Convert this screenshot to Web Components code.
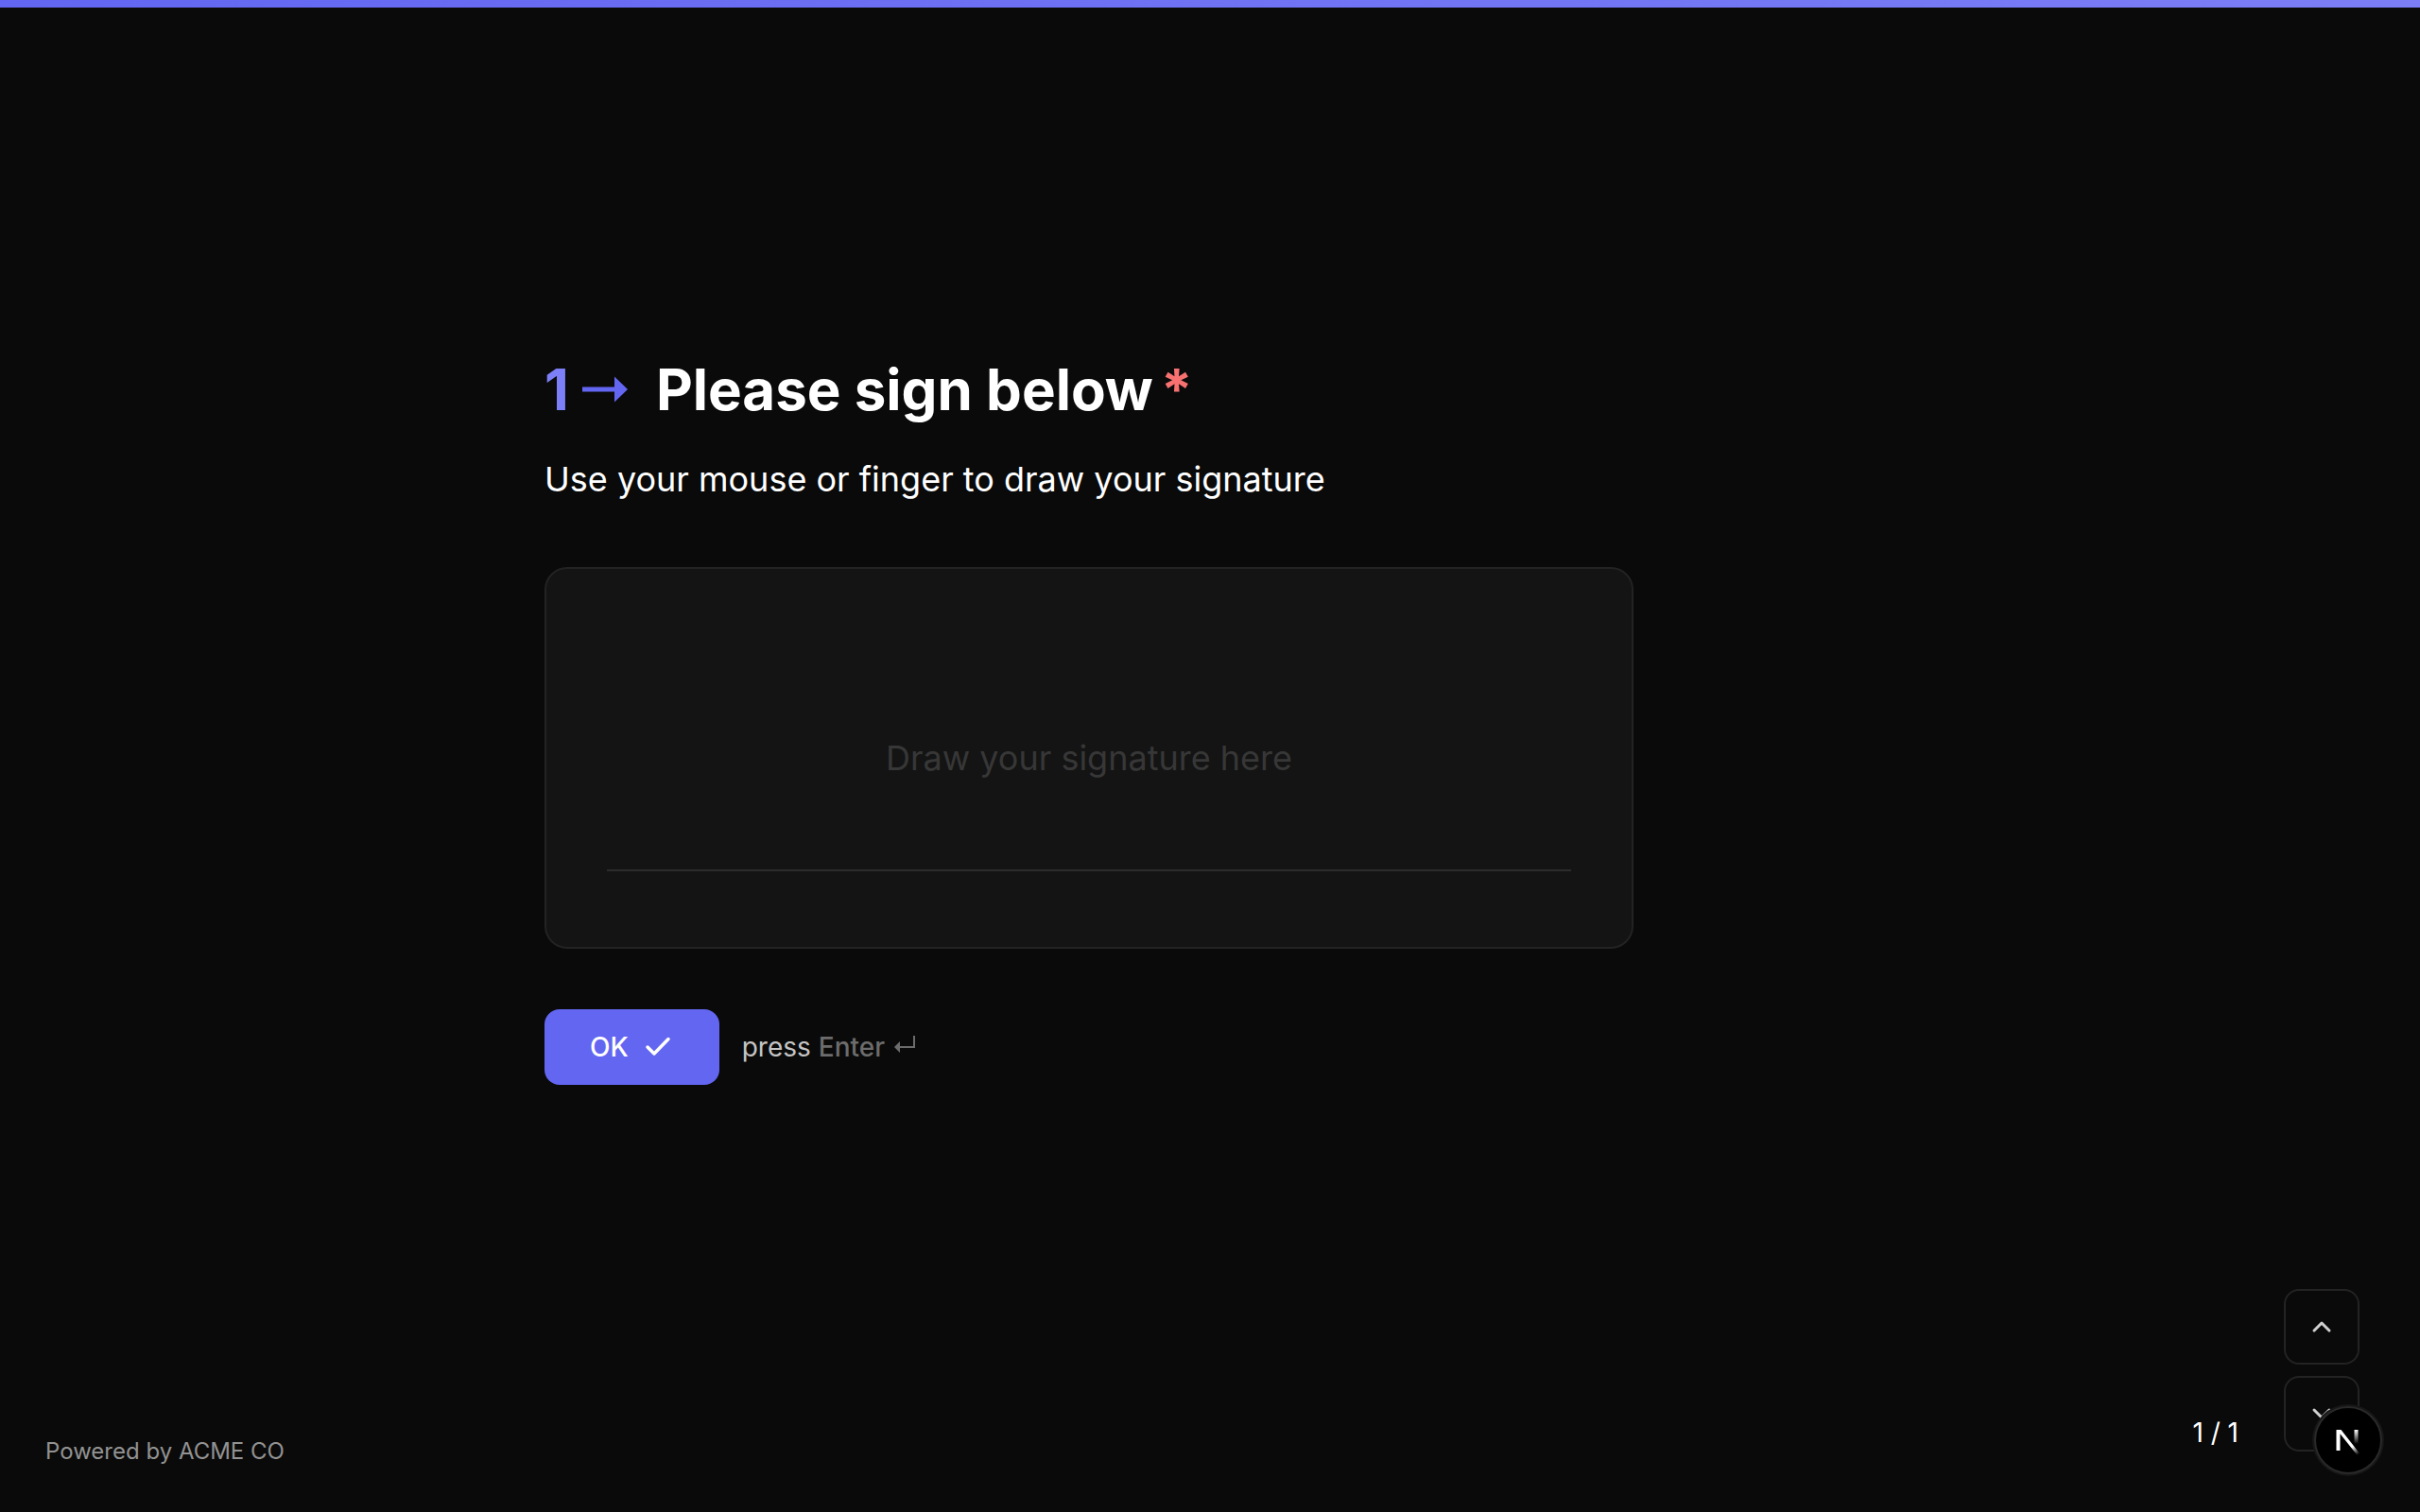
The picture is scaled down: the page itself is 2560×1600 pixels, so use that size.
<!DOCTYPE html>
<html lang="en">
<head>
<meta charset="utf-8">
<meta name="viewport" content="width=device-width, initial-scale=1">
<title>Please sign below</title>
<style>
  body {
    margin: 0;
    background: #0a0a0a;
    color: #fff;
    font-family: Inter, "Liberation Sans", sans-serif;
    -webkit-font-smoothing: antialiased;
  }
</style>
</head>
<body>
<form-app></form-app>

<script>
class ProgressBar extends HTMLElement {
  constructor () {
    super()
    this.attachShadow({ mode: 'open' }).innerHTML = /* html */`
      <style>
        :host {
          display: block;
          height: 8px;
          background: linear-gradient(to right, #6366f1, #7b7ef5);
        }
      </style>
    `
  }
}

class QuestionHeading extends HTMLElement {
  constructor () {
    super()
    this.attachShadow({ mode: 'open' }).innerHTML = /* html */`
      <style>
        :host {
          display: block;
        }

        h1 {
          display: flex;
          align-items: center;
          margin: 0;
          font-size: 60px;
          line-height: 72px;
          font-weight: 700;
        }

        .number {
          display: flex;
          align-items: center;
          gap: 14px;
          margin-right: 30px;
          color: #7c7ff7;
        }

        svg {
          width: 48px;
          height: 28px;
          fill: #6366f1;
        }

        .required {
          margin-left: 8px;
          color: #f87171;
        }

        p {
          margin: 32px 0 0;
          font-size: 36px;
          line-height: 54px;
        }
      </style>
      <h1>
        <span class="number">
          ${this.getAttribute('number')}
          <svg viewBox="0 0 48 28" aria-hidden="true"><path d="M0 11.5h34V0.5L48 14 34 27.5V16.5H0z"/></svg>
        </span>
        <slot name="title"></slot>
        <span class="required">*</span>
      </h1>
      <p><slot name="description"></slot></p>
    `
  }
}

class SignaturePad extends HTMLElement {
  constructor () {
    super()
    this.attachShadow({ mode: 'open' }).innerHTML = /* html */`
      <style>
        :host {
          display: grid;
          height: 400px;
          border: 2px solid #232323;
          border-radius: 24px;
          background: #141414;
        }

        .line,
        .placeholder {
          grid-area: 1 / 1;
        }

        .line {
          align-self: end;
          margin: 0 64px 80px;
          border-bottom: 2px solid #2c2c2c;
        }

        .placeholder {
          place-self: center;
          color: #373737;
          font-size: 36px;
          line-height: 54px;
        }
      </style>
      <div class="line"></div>
      <span class="placeholder"><slot></slot></span>
    `
  }
}

class SubmitRow extends HTMLElement {
  constructor () {
    super()
    this.attachShadow({ mode: 'open' }).innerHTML = /* html */`
      <style>
        :host {
          display: flex;
          align-items: center;
          gap: 24px;
          font-size: 28px;
          line-height: 40px;
        }

        button {
          display: flex;
          align-items: center;
          gap: 16px;
          height: 80px;
          padding: 0 48px;
          border: 0;
          border-radius: 16px;
          background: #6366f1;
          color: #fff;
          font: inherit;
          font-weight: 500;
        }

        button svg {
          width: 32px;
          height: 32px;
        }

        .hint {
          display: flex;
          align-items: center;
          gap: 8px;
          color: #c4c4c4;
        }

        .key {
          display: flex;
          align-items: center;
          gap: 10px;
          color: #6c6c6c;
          font-weight: 500;
        }

        .key svg {
          width: 24px;
          height: 24px;
        }
      </style>
      <button type="button">
        <slot></slot>
        <svg viewBox="0 0 32 32" fill="none" stroke="currentColor" stroke-width="3.5" stroke-linecap="round" stroke-linejoin="round" aria-hidden="true"><path d="M4 16l7 7L26 7.500"/></svg>
      </button>
      <span class="hint">
        <span>press</span>
        <span class="key">
          Enter
          <svg viewBox="0 0 24 24" fill="none" stroke="currentColor" stroke-width="2" aria-hidden="true"><path d="M21 0v12H5"/><path d="M6 6v12L0 12z" fill="currentColor" stroke="none"/></svg>
        </span>
      </span>
    `
  }
}

class QuestionNav extends HTMLElement {
  constructor () {
    super()
    this.attachShadow({ mode: 'open' }).innerHTML = /* html */`
      <style>
        :host {
          display: flex;
          align-items: flex-end;
          gap: 48px;
          font-size: 28px;
          line-height: 40px;
        }

        .buttons {
          display: grid;
          gap: 12px;
        }

        button {
          display: grid;
          place-items: center;
          width: 80px;
          height: 80px;
          padding: 0;
          border: 2px solid #232323;
          border-radius: 16px;
          background: transparent;
          color: #d0d0d0;
        }

        svg {
          width: 32px;
          height: 32px;
          fill: none;
          stroke: currentColor;
          stroke-width: 3;
          stroke-linecap: round;
          stroke-linejoin: round;
        }
      </style>
      <slot></slot>
      <div class="buttons">
        <button type="button" aria-label="Previous question"><svg viewBox="0 0 32 32"><path d="M8 20l8-8 8 8"/></svg></button>
        <button type="button" aria-label="Next question"><svg viewBox="0 0 32 32"><path d="M8 12l8 8 8-8"/></svg></button>
      </div>
    `
  }
}

class DevBadge extends HTMLElement {
  constructor () {
    super()
    this.attachShadow({ mode: 'open' }).innerHTML = /* html */`
      <style>
        :host {
          position: fixed;
          right: 40px;
          bottom: 40px;
        }

        button {
          display: grid;
          place-items: center;
          width: 72px;
          height: 72px;
          padding: 0;
          border: 2px solid #292929;
          border-radius: 50%;
          background: #000;
          box-shadow: 0 0 0 2px #171717;
        }

        svg {
          width: 28px;
          height: 32px;
        }
      </style>
      <button type="button" aria-label="Open dev tools">
        <svg viewBox="0 0 28 32" fill="none" aria-hidden="true">
          <defs>
            <linearGradient id="diagonal" gradientUnits="userSpaceOnUse" x1="16" y1="19" x2="25" y2="31">
              <stop offset="0.3" stop-color="#fff"/>
              <stop offset="1" stop-color="#fff" stop-opacity="0"/>
            </linearGradient>
            <linearGradient id="stem" gradientUnits="userSpaceOnUse" x1="0" y1="5" x2="0" y2="20">
              <stop stop-color="#fff"/>
              <stop offset="1" stop-color="#fff" stop-opacity="0"/>
            </linearGradient>
          </defs>
          <path d="M1.500 27V5h5L26.500 30.500l-2.800 1.500L5.500 9.300V27z" fill="url(#diagonal)"/>
          <path d="M20.500 5h4v15h-4z" fill="url(#stem)"/>
        </svg>
      </button>
    `
  }
}

class FormApp extends HTMLElement {
  constructor () {
    super()
    this.attachShadow({ mode: 'open' }).innerHTML = /* html */`
      <style>
        :host {
          display: grid;
          grid-template-rows: auto 1fr auto;
          min-height: 100vh;
        }

        main {
          display: grid;
          align-content: center;
          box-sizing: border-box;
          width: 100%;
          max-width: 1408px;
          margin: 0 auto;
          padding-right: 256px;
          padding-top: 152px;
        }

        signature-pad {
          margin: 66px 0 64px;
        }

        footer {
          display: flex;
          justify-content: space-between;
          align-items: flex-end;
          padding: 0 64px 64px 48px;
        }

        .brand {
          margin-bottom: -16px;
          color: #929292;
          font-size: 24px;
          line-height: 32px;
        }
      </style>
      <progress-bar></progress-bar>
      <main>
        <question-heading number="1">
          <span slot="title">Please sign below</span>
          <span slot="description">Use your mouse or finger to draw your signature</span>
        </question-heading>
        <signature-pad>Draw your signature here</signature-pad>
        <submit-row>OK</submit-row>
      </main>
      <footer>
        <span class="brand">Powered by ACME CO</span>
        <question-nav>1 / 1</question-nav>
      </footer>
      <dev-badge></dev-badge>
    `
  }
}

customElements.define('progress-bar', ProgressBar)
customElements.define('question-heading', QuestionHeading)
customElements.define('signature-pad', SignaturePad)
customElements.define('submit-row', SubmitRow)
customElements.define('question-nav', QuestionNav)
customElements.define('dev-badge', DevBadge)
customElements.define('form-app', FormApp)
</script>
</body>
</html>
